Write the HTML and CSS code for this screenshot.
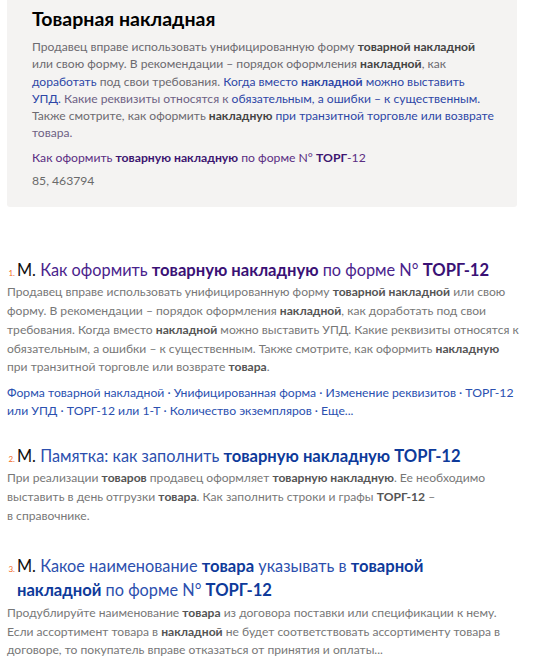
FILE: index.html
```html
<!DOCTYPE html>
<html lang="ru">
<head>
<meta charset="utf-8">
<title>Товарная накладная</title>
<link rel="stylesheet" href="styles.css">
</head>
<body>
<div class="card">
  <h1 class="card-title">Товарная накладная</h1>
  <p class="card-text"><span class="g">Продавец вправе использовать унифицированную форму</span> <b class="gb">товарной накладной</b><br><span class="g">или свою форму. В рекомендации – порядок оформления</span> <b class="gb">накладной</b><span class="g">, как</span><br><span class="bl">доработать</span> <span class="g">под свои требования.</span> <span class="bl">Когда вместо <b>накладной</b> можно выставить</span><br><span class="bl">УПД.</span> <span class="gp">Какие реквизиты относятся к</span> <span class="bl">обязательным, а ошибки – к существенным.</span><br><span class="g">Также смотрите, как оформить</span> <b class="gb">накладную</b> <span class="bl">при транзитной торговле или возврате</span><br><span class="gp">товара.</span></p>
  <p class="card-link">Как оформить <b>товарную накладную</b> по форме N° <b>ТОРГ</b>-12</p>
  <p class="card-meta">85, 463794</p>
</div>

<ol class="results">
  <li class="result with-links">
    <h2 class="result-title visited"><span class="src">М.</span> Как оформить <b>товарную накладную</b> по форме N° <b>ТОРГ-12</b></h2>
    <p class="snippet">Продавец вправе использовать унифицированную форму <b>товарной накладной</b> или свою форму. В рекомендации – порядок оформления <b>накладной</b>, как доработать под свои требования. Когда вместо <b>накладной</b> можно выставить УПД. Какие реквизиты относятся к обязательным, а ошибки – к существенным. Также смотрите, как оформить <b>накладную</b> при транзитной торговле или возврате <b>товара</b>.</p>
    <p class="sitelinks">Форма товарной накладной · Унифицированная форма · Изменение реквизитов · ТОРГ-12 или УПД · ТОРГ-12 или 1-Т · Количество экземпляров · Еще...</p>
  </li>
  <li class="result">
    <h2 class="result-title"><span class="src">М.</span> Памятка: как заполнить <b>товарную накладную ТОРГ-12</b></h2>
    <p class="snippet">При реализации <b>товаров</b> продавец оформляет <b>товарную накладную</b>. Ее необходимо выставить в день отгрузки <b>товара</b>. Как заполнить строки и графы <b>ТОРГ-12</b> –<br>в справочнике.</p>
  </li>
  <li class="result">
    <h2 class="result-title"><span class="src">М.</span> Какое наименование <b>товара</b> указывать в <b>товарной накладной</b> по форме N° <b>ТОРГ-12</b></h2>
    <p class="snippet">Продублируйте наименование <b>товара</b> из договора поставки или спецификации к нему. Если ассортимент товара в <b>накладной</b> не будет соответствовать ассортименту товара в договоре, то покупатель вправе отказаться от принятия и оплаты...</p>
  </li>
</ol>
</body>
</html>
```
FILE: styles.css
```css
html, body {
  margin: 0;
  padding: 0;
  background: #fff;
}
body {
  font-family: Lato, "Open Sans", sans-serif;
  width: 549px;
}
b {
  font-weight: 700;
}
.card {
  margin-left: 7px;
  width: 510px;
  box-sizing: border-box;
  padding: 3px 6px 18px 25px;
  background: #f4f3f2;
  border-radius: 0 0 3px 3px;
}
.card-title {
  margin: 0;
  font-size: 19.5px;
  line-height: 32px;
  font-weight: 700;
  color: #000;
}
.card-text {
  margin: 3px 0 0;
  font-size: 12.1px;
  line-height: 17.3px;
  white-space: nowrap;
}
.g { color: #6c6a70; }
.gb { color: #444; }
.gp { color: #6d6184; }
.bl { color: #2d46a6; }
.card-link {
  margin: 7px 0 0;
  font-size: 12.2px;
  line-height: 17px;
  color: #5a2d82;
}
.card-link b { color: #3c1670; }
.card-meta {
  margin: 6px 0 0;
  font-size: 12.2px;
  line-height: 17px;
  color: #6a6a6a;
}
.results {
  margin: 51px 0 0;
  padding: 0 29px 0 17px;
  list-style: decimal outside;
}
.result {
  margin-bottom: 29px;
}
.result.with-links {
  margin-bottom: 23px;
}
.result::marker {
  content: counter(list-item) ". ";
  font-family: Lato, sans-serif;
  font-size: 8px;
  color: #f26b1d;
}
.result-title {
  margin: 0 12px 0 0;
  font-size: 16.3px;
  line-height: 24px;
  font-weight: 400;
  color: #2c4fae;
}
.result-title b { font-size: 16.6px; color: #0e3a9a; }
.result-title.visited { color: #4a238c; }
.result-title.visited b { color: #3a1175; }
.src { color: #111; }
.snippet {
  margin: 1.5px 0 0 -10px;
  font-size: 12.1px;
  line-height: 18.75px;
  color: #777;
}
.snippet b { color: #555; }
.sitelinks {
  margin: 6.5px 0 0 -10px;
  font-size: 12.2px;
  line-height: 18.5px;
  color: #2a50b0;
}
```
